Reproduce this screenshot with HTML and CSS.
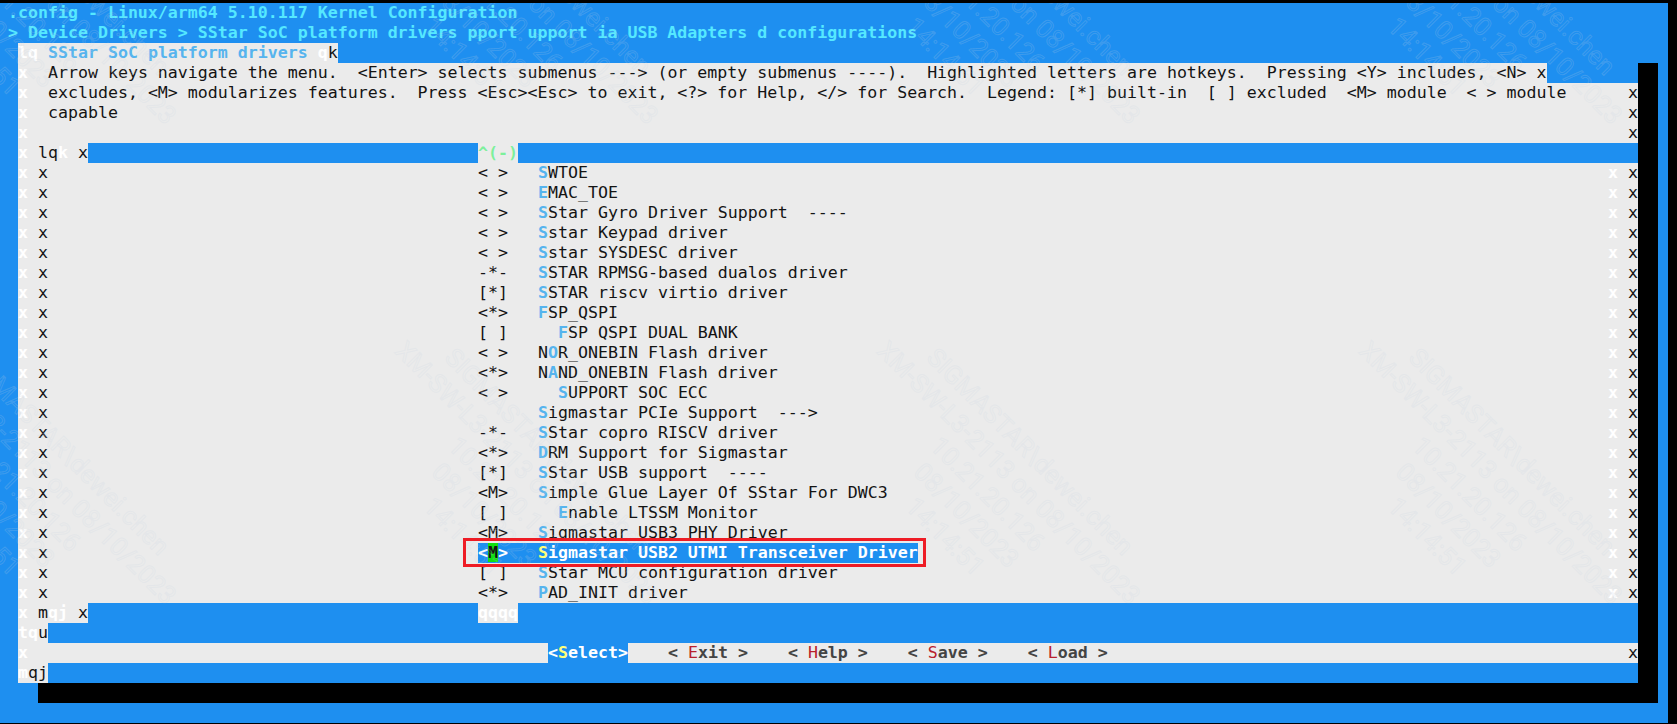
FILE: index.html
```html
<!DOCTYPE html>
<html lang="en">
<head>
<meta charset="utf-8">
<title>.config - Linux/arm64 5.10.117 Kernel Configuration</title>
<link rel="stylesheet" href="styles.css">
</head>
<body>
<main class="term">
  <div class="row head">.config - Linux/arm64 5.10.117 Kernel Configuration</div>
  <div class="row head">&gt; Device Drivers &gt; SStar SoC platform drivers pport upport ia USB Adapters d configurations</div>
  <section class="panel">
    <div class="row"><span class="lt"><span class="wh">lq</span> <span class="hot">SStar SoC platform drivers</span> <span class="wh">q</span>k</span><span class="fill"></span></div>
    <div class="row"><span class="lt"><span class="wh">x</span>  Arrow keys navigate the menu.  &lt;Enter&gt; selects submenus ---&gt; (or empty submenus ----).  Highlighted letters are hotkeys.  Pressing &lt;Y&gt; includes, &lt;N&gt; x</span><span class="fill"></span></div>
    <div class="row"><span><span class="wh">x</span>  excludes, &lt;M&gt; modularizes features.  Press &lt;Esc&gt;&lt;Esc&gt; to exit, &lt;?&gt; for Help, &lt;/&gt; for Search.  Legend: [*] built-in  [ ] excluded  &lt;M&gt; module  &lt; &gt; module</span><span class="end">x</span></div>
    <div class="row"><span><span class="wh">x</span>  capable</span><span class="end">x</span></div>
    <div class="row"><span class="wh">x</span><span class="end">x</span></div>
    <div class="row"><span class="lt"><span class="wh">x</span> lq<span class="wh">k</span> x</span><span class="bar"></span><span class="lt arrows">^(-)</span><span class="fill"></span></div>

    <div class="item"><span class="wh">x</span><span>x</span><span>&lt; &gt;</span><span><span class="hot">S</span>WTOE</span><span class="wh">x</span><span>x</span></div>
    <div class="item"><span class="wh">x</span><span>x</span><span>&lt; &gt;</span><span><span class="hot">E</span>MAC_TOE</span><span class="wh">x</span><span>x</span></div>
    <div class="item"><span class="wh">x</span><span>x</span><span>&lt; &gt;</span><span><span class="hot">S</span>Star Gyro Driver Support  ----</span><span class="wh">x</span><span>x</span></div>
    <div class="item"><span class="wh">x</span><span>x</span><span>&lt; &gt;</span><span><span class="hot">S</span>star Keypad driver</span><span class="wh">x</span><span>x</span></div>
    <div class="item"><span class="wh">x</span><span>x</span><span>&lt; &gt;</span><span><span class="hot">S</span>star SYSDESC driver</span><span class="wh">x</span><span>x</span></div>
    <div class="item"><span class="wh">x</span><span>x</span><span>-*-</span><span><span class="hot">S</span>STAR RPMSG-based dualos driver</span><span class="wh">x</span><span>x</span></div>
    <div class="item"><span class="wh">x</span><span>x</span><span>[*]</span><span><span class="hot">S</span>STAR riscv virtio driver</span><span class="wh">x</span><span>x</span></div>
    <div class="item"><span class="wh">x</span><span>x</span><span>&lt;*&gt;</span><span><span class="hot">F</span>SP_QSPI</span><span class="wh">x</span><span>x</span></div>
    <div class="item"><span class="wh">x</span><span>x</span><span>[ ]</span><span>  <span class="hot">F</span>SP QSPI DUAL BANK</span><span class="wh">x</span><span>x</span></div>
    <div class="item"><span class="wh">x</span><span>x</span><span>&lt; &gt;</span><span>N<span class="hot">O</span>R_ONEBIN Flash driver</span><span class="wh">x</span><span>x</span></div>
    <div class="item"><span class="wh">x</span><span>x</span><span>&lt;*&gt;</span><span>N<span class="hot">A</span>ND_ONEBIN Flash driver</span><span class="wh">x</span><span>x</span></div>
    <div class="item"><span class="wh">x</span><span>x</span><span>&lt; &gt;</span><span>  <span class="hot">S</span>UPPORT SOC ECC</span><span class="wh">x</span><span>x</span></div>
    <div class="item"><span class="wh">x</span><span>x</span><span></span><span><span class="hot">S</span>igmastar PCIe Support  ---&gt;</span><span class="wh">x</span><span>x</span></div>
    <div class="item"><span class="wh">x</span><span>x</span><span>-*-</span><span><span class="hot">S</span>Star copro RISCV driver</span><span class="wh">x</span><span>x</span></div>
    <div class="item"><span class="wh">x</span><span>x</span><span>&lt;*&gt;</span><span><span class="hot">D</span>RM Support for Sigmastar</span><span class="wh">x</span><span>x</span></div>
    <div class="item"><span class="wh">x</span><span>x</span><span>[*]</span><span><span class="hot">S</span>Star USB support  ----</span><span class="wh">x</span><span>x</span></div>
    <div class="item"><span class="wh">x</span><span>x</span><span>&lt;M&gt;</span><span><span class="hot">S</span>imple Glue Layer Of SStar For DWC3</span><span class="wh">x</span><span>x</span></div>
    <div class="item"><span class="wh">x</span><span>x</span><span>[ ]</span><span>  <span class="hot">E</span>nable LTSSM Monitor</span><span class="wh">x</span><span>x</span></div>
    <div class="item"><span class="wh">x</span><span>x</span><span>&lt;M&gt;</span><span><span class="hot">S</span>igmastar USB3 PHY Driver</span><span class="wh">x</span><span>x</span></div>
    <div class="item selected"><span class="wh">x</span><span>x</span><span class="sel">&lt;<span class="cursor">M</span>&gt;   </span><span class="sel"><span class="key">S</span>igmastar USB2 UTMI Transceiver Driver</span><span class="wh">x</span><span>x</span></div>
    <div class="item"><span class="wh">x</span><span>x</span><span>[ ]</span><span><span class="hot">S</span>Star MCU configuration driver</span><span class="wh">x</span><span>x</span></div>
    <div class="item"><span class="wh">x</span><span>x</span><span>&lt;*&gt;</span><span><span class="hot">P</span>AD_INIT driver</span><span class="wh">x</span><span>x</span></div>

    <div class="row"><span class="lt"><span class="wh">x</span> m<span class="wh">qj</span> x</span><span class="bar"></span><span class="lt wh">qqqq</span><span class="fill"></span></div>
    <div class="row"><span class="lt"><span class="wh">tq</span>u</span><span class="fill"></span></div>
    <div class="row">
      <span class="wh btn-gap">x</span>
      <div class="buttons">
        <span class="btn active">&lt;<span class="key">S</span>elect&gt;</span>
        <span class="btn">&lt; <span class="red">E</span>xit &gt;</span>
        <span class="btn">&lt; <span class="red">H</span>elp &gt;</span>
        <span class="btn">&lt; <span class="red">S</span>ave &gt;</span>
        <span class="btn">&lt; <span class="red">L</span>oad &gt;</span>
      </div>
      <span class="end">x</span>
    </div>
    <div class="row"><span class="lt"><span class="wh">m</span>qj</span><span class="fill"></span></div>
  </section>

  <div class="watermark" aria-hidden="true">
    <div class="wm-grid">
      <div class="tile"><div class="tile-text">SIGMASTAR\dewei.chen<br>XM-SW-L3-2113 on 08/10/2023<br>10.21.20.126<br>08/10/2023<br>14:14:51</div></div>
      <div class="tile"><div class="tile-text">SIGMASTAR\dewei.chen<br>XM-SW-L3-2113 on 08/10/2023<br>10.21.20.126<br>08/10/2023<br>14:14:51</div></div>
      <div class="tile"><div class="tile-text">SIGMASTAR\dewei.chen<br>XM-SW-L3-2113 on 08/10/2023<br>10.21.20.126<br>08/10/2023<br>14:14:51</div></div>
      <div class="tile"><div class="tile-text">SIGMASTAR\dewei.chen<br>XM-SW-L3-2113 on 08/10/2023<br>10.21.20.126<br>08/10/2023<br>14:14:51</div></div>
      <div class="tile"><div class="tile-text">SIGMASTAR\dewei.chen<br>XM-SW-L3-2113 on 08/10/2023<br>10.21.20.126<br>08/10/2023<br>14:14:51</div></div>
      <div class="tile"><div class="tile-text">SIGMASTAR\dewei.chen<br>XM-SW-L3-2113 on 08/10/2023<br>10.21.20.126<br>08/10/2023<br>14:14:51</div></div>
      <div class="tile"><div class="tile-text">SIGMASTAR\dewei.chen<br>XM-SW-L3-2113 on 08/10/2023<br>10.21.20.126<br>08/10/2023<br>14:14:51</div></div>
      <div class="tile"><div class="tile-text">SIGMASTAR\dewei.chen<br>XM-SW-L3-2113 on 08/10/2023<br>10.21.20.126<br>08/10/2023<br>14:14:51</div></div>
    </div>
  </div>

  <div class="shadow-right"></div>
  <div class="shadow-bottom"></div>
  <div class="callout"></div>
</main>
</body>
</html>
```
FILE: styles.css
```css
html, body {
  margin: 0;
  height: 100%;
  overflow: hidden;
  background: #000;
}

.term {
  position: relative;
  width: 1668px;
  height: 720px;
  margin-top: 3px;
  overflow: hidden;
  background: #1e8ff0;
  color: #141414;
  font-family: "DejaVu Sans Mono", "Liberation Mono", monospace;
  font-size: 16.6px;
  line-height: 20px;
}

.row, .item {
  height: 20px;
  white-space: pre;
}

.row { display: flex; }

.head {
  padding-left: 8px;
  color: #55e8ff;
  font-weight: bold;
}

.panel {
  width: 1620px;
  margin-left: 18px;
  background: #ebebeb;
}

.lt { background: #ebebeb; }
.fill { flex: 1; background: #1e8ff0; }
.bar { width: 390px; background: #1e8ff0; }
.end { margin-left: auto; width: 10px; }

.wh { color: #fff; font-weight: bold; }
.hot { color: #56b4ee; font-weight: bold; }
.arrows { color: #7df09c; font-weight: bold; }
.red { color: #b8202c; font-weight: normal; }

.item {
  display: grid;
  grid-template-columns: 20px 440px 60px 1070px 20px 10px;
}

.item > span:nth-child(4) { justify-self: start; }

.sel {
  background: #1e8ff0;
  color: #fff;
  font-weight: bold;
}

.cursor { background: #10e010; color: #141414; }
.key { color: #ffff7a; font-weight: bold; }

.btn-gap { width: 530px; }

.buttons {
  display: flex;
  gap: 40px;
}

.btn { color: #444; font-weight: bold; }
.btn.active { background: #1e8ff0; color: #fff; }

.watermark {
  position: absolute;
  inset: 0;
  overflow: hidden;
  pointer-events: none;
}

.wm-grid {
  display: grid;
  grid-template-columns: repeat(4, 482px);
  grid-auto-rows: 480px;
  width: 1928px;
  margin-left: -61px;
  margin-top: -180px;
}

.tile-text {
  width: 390px;
  transform: rotate(45deg);
  transform-origin: 0 0;
  text-align: center;
  font-family: Roboto, "Liberation Sans", sans-serif;
  font-size: 25.5px;
  line-height: 30px;
  color: transparent;
  -webkit-text-stroke: 1px rgba(200, 212, 226, 0.2);
}

.shadow-right {
  position: absolute;
  left: 1638px;
  top: 60px;
  width: 20px;
  height: 640px;
  background: #000;
}

.shadow-bottom {
  position: absolute;
  left: 38px;
  top: 680px;
  width: 1620px;
  height: 20px;
  background: #000;
}

.callout {
  position: absolute;
  left: 463px;
  top: 535px;
  width: 457px;
  height: 23px;
  border: 3px solid #ee1c25;
}
```
